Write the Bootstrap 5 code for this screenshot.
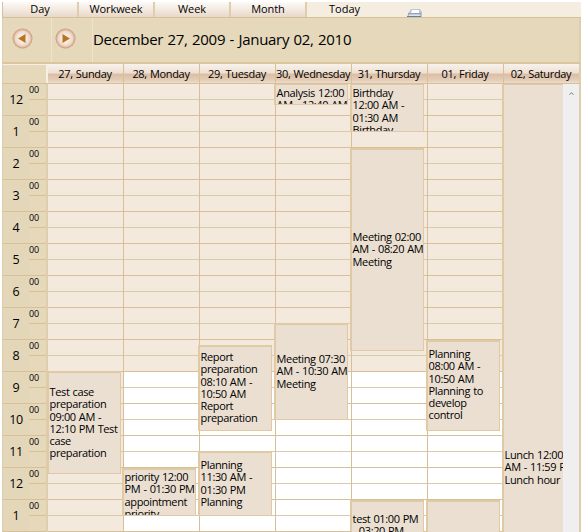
<!DOCTYPE html>
<html lang="en">
<head>
<meta charset="utf-8">
<title>Schedule</title>
<link href="https://cdn.jsdelivr.net/npm/bootstrap@5.3.0/dist/css/bootstrap.min.css" rel="stylesheet">
<style>
:root{--tan:#e6d8bb;--line:#d8c096;--soft:#dfceae;--cream:#f3eadd;--rose:#ebdfd2}
body{background:#fff;font-family:"Trebuchet MS","Open Sans","Noto Sans",sans-serif;font-size:11px;line-height:12.25px;color:#000;width:581px;height:532px;overflow:hidden}
.sched{width:581px;height:532px;padding:2px 0 0 2px}
.tabs{height:16px;background:#f5ede0;border-bottom:1px solid var(--line);border-left:1px solid var(--line);line-height:14px}
.tab-item{width:76px;border-right:2px solid var(--soft);background:linear-gradient(#fdfaf7,#f4ebe2 45%,#e8d9c9);text-align:center;letter-spacing:-.1px}
.today{width:75px;text-align:center}
.printer{margin:7px 0 0 25px;display:block}
.navbar-dates{height:46px;background:var(--tan);border-bottom:2px solid #dcc59d;border-left:1px solid var(--soft);border-right:2px solid var(--soft)}
.cell-nav{width:49px;height:44px;padding:10px 0 0 9px;border-right:1px solid #efe3cc}
.cell-nav+.cell-nav{width:41px;padding-left:3px}
.dates{font-size:15px;line-height:18px;padding:12px 0 0 0;letter-spacing:-.3px;word-spacing:.8px;white-space:nowrap}
.heads{height:20px;background:var(--tan);border-bottom:1px solid var(--line);border-right:2px solid var(--soft)}
.corner{width:46px;border-left:1px solid var(--soft);border-right:2px solid #f6efe2;border-top:1px solid #f6efe2}
.dayhead{width:76px;text-align:center;line-height:19px;letter-spacing:-.32px;word-spacing:.5px;padding-right:1px;border-right:1px solid var(--line);white-space:nowrap;background:linear-gradient(#f8f2ec,#eee1d3 45%,#dabfa5 55%,#e4cdb8 85%,#eddccd)}
.dayhead:last-child{border:0;width:75px}
.grid{height:448px;overflow:hidden}
.times{width:46px;background:var(--tan);border-left:1px solid var(--soft);border-right:2px solid var(--soft)}
.hour{height:32px;border-bottom:1px solid var(--line)}
.hour-num{width:26px;text-align:center;font-size:12.5px;line-height:31px;background:#e4d6b8;letter-spacing:-.3px}
.mins{width:17px;font-size:9px;line-height:12px;height:16px;border-bottom:1px solid var(--line);letter-spacing:-.2px}
.day{width:76px;position:relative;background:var(--cream);border-right:1px solid var(--line)}
.day:nth-child(8){width:59px;border:0}
.slot{height:16px;border-bottom:1px solid #dbc9ab}
.slot:nth-child(even){border-color:var(--line)}
.work .slot:nth-child(n+19){background:#fff}
.ev{position:absolute;left:-2px;width:74px;background:var(--rose);border:2px solid #dfcaa5;border-right-width:1px;border-bottom-width:1px;overflow:hidden;white-space:nowrap;padding-left:.6px;letter-spacing:-.38px;word-spacing:.6px;z-index:1}
.first .ev{left:-1px}
.scroll{width:16px;background:#efefef}
.edge{width:2px;background:var(--soft)}
</style>
</head>
<body>
<div class="sched">
 <div class="tabs d-flex">
  <div class="tab-item">Day</div><div class="tab-item">Workweek</div><div class="tab-item">Week</div><div class="tab-item">Month</div><div class="today">Today</div>
  <svg class="printer" width="15" height="8" viewBox="0 0 15 8"><path d="M4 0h9l2 3v5H0l2-5z" fill="#b8c5d7"/><path d="M5 1h7v3H4z" fill="#fff"/><path d="M1 5h13M0 7.5h14" stroke="#667da4"/><path d="M2 6h11" stroke="#fff"/></svg>
 </div>
 <div class="navbar-dates d-flex">
  <div class="cell-nav"><svg width="21" height="21" viewBox="0 0 21 21"><defs><radialGradient id="b"><stop offset=".3" stop-color="#faf0e8"/><stop offset=".72" stop-color="#edd7c8"/><stop offset="1" stop-color="#c99773"/></radialGradient></defs><circle cx="10.5" cy="10.5" r="10" fill="url(#b)"/><path d="M13.5 6v9L6 10.5z" fill="#b97422"/></svg></div>
  <div class="cell-nav"><svg width="21" height="21" viewBox="0 0 21 21"><circle cx="10.5" cy="10.5" r="10" fill="url(#b)"/><path d="M7.5 6v9l7.5-4.5z" fill="#b97422"/></svg></div>
  <div class="dates">December 27, 2009 - January 02, 2010</div>
 </div>
 <div class="heads d-flex">
  <div class="corner"></div>
  <div class="dayhead">27, Sunday</div><div class="dayhead">28, Monday</div><div class="dayhead">29, Tuesday</div><div class="dayhead">30, Wednesday</div><div class="dayhead">31, Thursday</div><div class="dayhead">01, Friday</div><div class="dayhead">02, Saturday</div>
 </div>
 <div class="grid d-flex">
  <div class="times"></div>
  <div class="day first"><div class="ev" style="top:287px;height:103px;padding-top:13px">Test case<br>preparation<br>09:00 AM -<br>12:10 PM Test<br>case<br>preparation</div></div>
  <div class="day work"><div class="ev" style="top:384px;height:48px;padding-top:1px">priority 12:00<br>PM - 01:30 PM<br>appointment<br>priority</div></div>
  <div class="day work"><div class="ev" style="top:261px;height:86px;padding-top:4px">Report<br>preparation<br>08:10 AM -<br>10:50 AM<br>Report<br>preparation</div><div class="ev" style="top:367px;height:65px;padding-top:6px">Planning<br>11:30 AM -<br>01:30 PM<br>Planning</div></div>
  <div class="day work"><div class="ev" style="top:-1px;height:22px;padding-top:2px">Analysis 12:00<br>AM - 12:40 AM</div><div class="ev" style="top:239px;height:97px;padding-top:28px">Meeting 07:30<br>AM - 10:30 AM<br>Meeting</div></div>
  <div class="day work"><div class="ev" style="top:-1px;height:49px;padding-top:2px">Birthday<br>12:00 AM -<br>01:30 AM<br>Birthday</div><div class="ev" style="top:64px;height:203px;padding-top:81px">Meeting 02:00<br>AM - 08:20 AM<br>Meeting</div><div class="ev" style="top:416px;height:70px;padding-top:11px">test 01:00 PM<br>- 03:20 PM</div></div>
  <div class="day work"><div class="ev" style="top:256px;height:91px;padding-top:6px">Planning<br>08:00 AM -<br>10:50 AM<br>Planning to<br>develop<br>control</div><div class="ev" style="top:416px;height:70px"></div></div>
  <div class="day"><div class="ev border-end-0" style="top:-1px;height:470px;width:61px;padding-top:364px">Lunch 12:00<br>AM - 11:59 PM<br>Lunch hour</div></div>
  <div class="scroll"><svg class="d-block mx-auto mt-2" width="5" height="3" viewBox="0 0 5 3"><path d="M.5 2.5L2.5.8l2 1.7" fill="none" stroke="#777"/></svg></div>
  <div class="edge"></div>
 </div>
</div>
<script>
const times = document.querySelector('.times');
for (let h = 0; h < 14; h++) {
  times.insertAdjacentHTML('beforeend', `<div class="hour d-flex"><div class="hour-num">${h % 12 || 12}</div><div class="mins">00</div></div>`);
}
document.querySelectorAll('.day').forEach(d => d.insertAdjacentHTML('afterbegin', '<div class="slot"></div>'.repeat(28)));
</script>
<script src="https://cdn.jsdelivr.net/npm/bootstrap@5.3.0/dist/js/bootstrap.bundle.min.js"></script>
</body>
</html>
